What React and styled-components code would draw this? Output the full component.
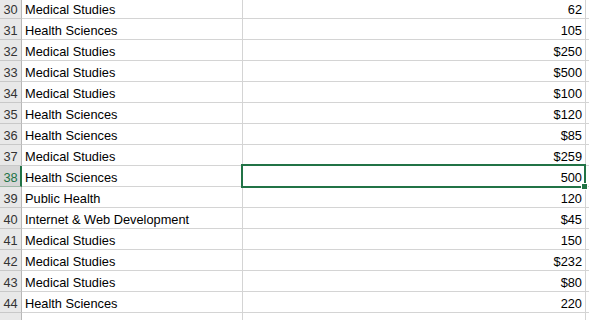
import React from "react";
import styled, { createGlobalStyle } from "styled-components";

const Global = createGlobalStyle`
  html, body { margin: 0; padding: 0; background: #fff; overflow: hidden; }
  body { font-family: "Liberation Sans", Arial, sans-serif; }
`;

const Sheet = styled.div`
  width: 589px;
  height: 320px;
  overflow: hidden;
  background: #fff;
`;

const Rows = styled.div`
  display: flex;
  flex-direction: column;
  margin-top: -2px;
`;

const Row = styled.div`
  display: grid;
  grid-template-columns: 22px 221px 343px 1fr;
  height: 21px;
`;

const Header = styled.div`
  box-sizing: border-box;
  background: ${(p) => (p.$active ? "#d6d6d6" : "#e8e8e8")};
  color: ${(p) => (p.$active ? "#217346" : "#333")};
  border-bottom: 1px solid ${(p) => (p.$active ? "#9fb7a7" : "#c8c8c8")};
  border-right: ${(p) => (p.$active ? "2px solid #217346" : "1px solid #b8b8b8")};
  font-size: 12.8px;
  line-height: 17px;
  padding-top: 3px;
  text-align: center;
  padding-left: ${(p) => (p.$active ? "1px" : "0")};
`;

const Cell = styled.div`
  position: relative;
  box-sizing: border-box;
  border-bottom: 1px solid #d4d4d4;
  border-right: 1px solid #d4d4d4;
  font-size: 12.8px;
  line-height: 17px;
  color: #000;
  white-space: nowrap;
  overflow: ${(p) => (p.$selected ? "visible" : "hidden")};
  text-align: ${(p) => (p.$num ? "right" : "left")};
  padding: ${(p) => (p.$num ? "3px 3px 0 0" : "3px 0 0 3px")};
  ${(p) =>
    p.$selected &&
    `
    z-index: 2;
    &::after {
      content: "";
      position: absolute;
      left: -2px;
      top: -2px;
      right: -1px;
      bottom: -2px;
      border: 2px solid #217346;
      pointer-events: none;
    }
  `}
`;

const FillHandle = styled.span`
  position: absolute;
  right: -2px;
  bottom: -3px;
  width: 5px;
  height: 5px;
  background: #217346;
  outline: 1px solid #fff;
  z-index: 3;
`;

const data = [
  [30, "Medical Studies", "62"],
  [31, "Health Sciences", "105"],
  [32, "Medical Studies", "$250"],
  [33, "Medical Studies", "$500"],
  [34, "Medical Studies", "$100"],
  [35, "Health Sciences", "$120"],
  [36, "Health Sciences", "$85"],
  [37, "Medical Studies", "$259"],
  [38, "Health Sciences", "500"],
  [39, "Public Health", "120"],
  [40, "Internet & Web Development", "$45"],
  [41, "Medical Studies", "150"],
  [42, "Medical Studies", "$232"],
  [43, "Medical Studies", "$80"],
  [44, "Health Sciences", "220"],
  [45, "", ""],
];

export default function App() {
  return (
    <Sheet>
      <Global />
      <Rows>
        {data.map(([n, a, b]) => {
          const sel = n === 38;
          return (
            <Row key={n}>
              <Header $active={sel}>{n === 45 ? "" : n}</Header>
              <Cell>{a}</Cell>
              <Cell $num $selected={sel}>
                {b}
                {sel && <FillHandle />}
              </Cell>
              <Cell />
            </Row>
          );
        })}
      </Rows>
    </Sheet>
  );
}
